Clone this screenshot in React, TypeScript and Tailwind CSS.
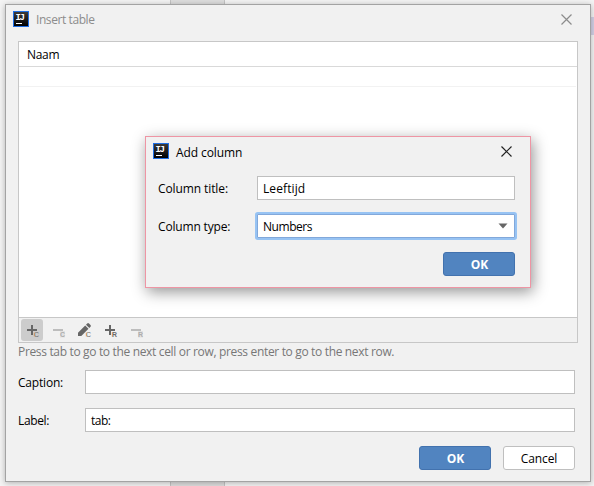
import type { ReactNode } from 'react';

function Logo() {
  return (
    <svg width="16" height="16" viewBox="0 0 16 16" className="block shrink-0">
      <defs>
        <linearGradient id="logo-fill" x1="0" y1="0" x2="0" y2="1">
          <stop offset="0" stopColor="#3a3a3a" />
          <stop offset="1" stopColor="#000000" />
        </linearGradient>
      </defs>
      <rect width="16" height="16" fill="#1f6fe5" />
      <rect x="1" y="1" width="14" height="14" fill="url(#logo-fill)" />
      <text x="2.4" y="9" fontSize="9" textLength="9.6" className="fill-white font-['Liberation_Mono',monospace] font-bold">IJ</text>
      <rect x="3" y="12" width="6" height="1" fill="#fff" />
    </svg>
  );
}

function Close({ color }: { color: string }) {
  return (
    <svg width="11" height="11" viewBox="0 0 11 11" className="block shrink-0">
      <path d="M.5.5l10 10M10.5.5l-10 10" stroke={color} strokeWidth="1.2" />
    </svg>
  );
}

type ToolProps = { kind: 'plus' | 'minus' | 'pencil'; letter: string; active?: boolean; disabled?: boolean };

function Tool({ kind, letter, active, disabled }: ToolProps) {
  const color = disabled ? '#bdbdbd' : '#666666';
  return (
    <div className={`h-[22px] w-[22px] shrink-0 rounded-[3px] ${active ? 'bg-[#cccccc]' : ''}`}>
      <svg width="22" height="22" viewBox="0 0 22 22" className="block">
        {kind === 'plus' && <path d="M6 11h10M11 6v10" stroke={color} strokeWidth="2" />}
        {kind === 'minus' && <path d="M6 11h10" stroke={color} strokeWidth="2" />}
        {kind === 'pencil' && (
          <path d="M5 17v-3.2l7.2-7.3 3.3 3.3L8.3 17zM13 5.7l1.2-1.2q.9-.9 1.8 0l1.5 1.5q.9.9 0 1.8L16.3 9z" fill={color} />
        )}
        <rect x="13" y="12" width="5" height="6.5" fill={active ? '#cccccc' : disabled ? '#e2e2e2' : '#f1f1f1'} />
        <text
          x="13"
          y="18"
          fontSize="7.5"
          textLength="5"
          lengthAdjust="spacingAndGlyphs"
          fill={disabled ? '#adadad' : '#6b6b6b'}
          className={`font-['Liberation_Sans',sans-serif] ${disabled || letter === 'R' ? 'font-bold' : ''}`}
        >
          {letter}
        </text>
        {!disabled && <path d="M13.3 13.5v4" stroke="#d98a45" strokeWidth=".6" />}
      </svg>
    </div>
  );
}

function Button({ primary, children }: { primary?: boolean; children: ReactNode }) {
  return (
    <button
      className={`flex h-6 w-[72px] items-center justify-center rounded-[3px] border pt-0.5 ${
        primary ? 'border-[#4272ae] bg-[#5184c0] pl-px font-bold text-white' : 'border-[#bfbfbf] bg-white tracking-[-0.1px]'
      }`}
    >
      {children}
    </button>
  );
}

function AddColumnDialog() {
  return (
    <section className="absolute left-[145px] top-[136px] h-[152px] w-[386px] border border-[#ee95a4] bg-[#f1f1f1] shadow-[2px_4px_14px_rgba(0,0,0,0.42)]">
      <header className="flex h-[39px] pl-[7px] pr-[18px]">
        <div className="pt-1.5"><Logo /></div>
        <span className="ml-[7px] mt-[7px] leading-[18px] tracking-[-0.1px]">Add column</span>
        <div className="ml-auto pt-[9px]"><Close color="#222222" /></div>
      </header>
      <div className="flex h-6 items-center pl-3 pr-[15px]">
        <label className="w-[99px] pt-0.5 tracking-[-0.1px]">Column title:</label>
        <div className="flex h-6 flex-1 items-center border border-[#bfbfbf] bg-white pl-[5px] pt-0.5 tracking-[0.1px]">Leeftijd</div>
      </div>
      <div className="mt-3.5 flex h-6 items-center pl-3 pr-[15px]">
        <label className="w-[99px] pt-0.5 tracking-[-0.17px]">Column type:</label>
        <div className="flex h-6 flex-1 items-center justify-between rounded-[1px] border border-[#82a8da] bg-white pl-[5px] pr-1.5 shadow-[0_0_0_2px_#97c3f3]">
          <span className="pt-0.5 tracking-[-0.45px]">Numbers</span>
          <svg width="10" height="6" viewBox="0 0 10 6"><path d="M.5.5h9L5 5.5z" fill="#666666" /></svg>
        </div>
      </div>
      <div className="mt-3.5 flex justify-end pr-[15px]"><Button primary>OK</Button></div>
    </section>
  );
}

export default function App() {
  return (
    <main className="relative h-[486px] w-[594px] overflow-hidden bg-[#f4f4f4] pl-[5px] pt-1 font-['Open_Sans','Noto_Sans',sans-serif] text-[12px] leading-[18px] text-black">
      <div className="absolute left-[170px] top-0 h-[486px] w-[55px] border-x border-[#c4c4c4] bg-[#dedede]" />
      <div className="absolute right-0 top-[17px] h-[18px] w-[4px] bg-[#d3d1e6]" />
      <section className="relative h-[478px] w-[586px] border border-[#a3a3a3] bg-[#f1f1f1] shadow-[0_1px_6px_rgba(0,0,0,0.28)]">
        <header className="flex h-9 pl-[7px] pr-[18px]">
          <div className="pt-1.5"><Logo /></div>
          <span className="ml-[7px] mt-[6px] leading-[18px] tracking-[-0.42px] text-[#8c8c8c]">Insert table</span>
          <div className="ml-auto pt-[9px]"><Close color="#8c8c8c" /></div>
        </header>
        <div className="ml-3 flex h-[302px] w-[560px] flex-col border border-[#c7c7c7] bg-white">
          <div className="h-[25px] border-b border-[#d9d9d9] pl-2 pt-1 tracking-[-0.3px]">Naam</div>
          <div className="mr-px h-5 border-b border-[#f2f2f2]" />
          <div className="mt-auto flex h-[25px] gap-1 border-t border-[#c7c7c7] bg-[#f1f1f1] pl-0.5 pt-px">
            <Tool kind="plus" letter="C" active />
            <Tool kind="minus" letter="C" disabled />
            <Tool kind="pencil" letter="C" />
            <Tool kind="plus" letter="R" />
            <Tool kind="minus" letter="R" disabled />
          </div>
        </div>
        <p className="ml-3 h-[27px] whitespace-nowrap tracking-[-0.335px] text-[#777777]">Press tab to go to the next cell or row, press enter to go to the next row.</p>
        <div className="flex h-6 items-center pl-3 pr-[15px]">
          <label className="w-[67px] pt-0.5 tracking-[-0.2px]">Caption:</label>
          <div className="h-6 flex-1 border border-[#bfbfbf] bg-white" />
        </div>
        <div className="mt-3.5 flex h-6 items-center pl-3 pr-[15px]">
          <label className="w-[67px] pt-0.5 tracking-[-0.35px]">Label:</label>
          <div className="flex h-6 flex-1 items-center border border-[#bfbfbf] bg-white pl-[5px] pt-0.5 tracking-[-0.5px]">tab:</div>
        </div>
        <div className="mt-3.5 flex justify-end gap-3 pr-[15px]">
          <Button primary>OK</Button>
          <Button>Cancel</Button>
        </div>
      </section>
      <AddColumnDialog />
    </main>
  );
}
